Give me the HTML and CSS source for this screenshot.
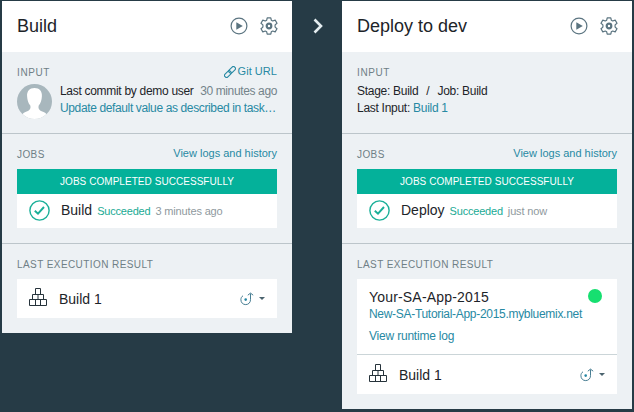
FILE: index.html
```
<!DOCTYPE html>
<html lang="en">
<head>
<meta charset="utf-8">
<title>Delivery Pipeline</title>
<link rel="stylesheet" href="styles.css">
</head>
<body>
<svg class="defs" aria-hidden="true">
  <symbol id="play" viewBox="0 0 18 18"><circle cx="9" cy="9" r="7.900" fill="none" stroke="currentColor" stroke-width="1.200"/><path d="M6.300 5.200 12.800 9l-6.500 3.800z" fill="currentColor"/></symbol>
  <symbol id="gear" viewBox="0 0 18 18"><path d="M7.200.8h3.600l.5 2.400 1.400.8 2.500-.9L17 6.200l-1.900 1.700v2.200l1.900 1.700-1.800 3.100-2.500-.9-1.400.8-.5 2.400H7.200l-.5-2.400-1.400-.8-2.500.9L1 11.800l1.900-1.700V7.900L1 6.200l1.800-3.100 2.500.9 1.400-.8z" fill="none" stroke="currentColor" stroke-width="1.200" stroke-linejoin="round"/><circle cx="9" cy="9" r="2.300" fill="none" stroke="currentColor" stroke-width="2.200"/></symbol>
  <symbol id="check" viewBox="0 0 21 21"><circle cx="10.500" cy="10.500" r="9.600" fill="none" stroke="currentColor" stroke-width="1.400"/><path d="m5.800 10.700 3.200 3 6-6.700" fill="none" stroke="currentColor" stroke-width="1.900"/></symbol>
  <symbol id="blocks" viewBox="0 0 18 18"><path d="M6.500.5h5v6h-5zM3.500 6.500h11v5h-11zM9 6.500v5M.5 11.500h17v6H.5zM6.500 11.500v6M11.500 11.500v6" fill="none" stroke="currentColor"/></symbol>
  <symbol id="deploy" viewBox="0 0 14 14"><path d="M3 3.800C1.500 4.600.9 6.200.9 7.700c0 3 2.100 4.900 4.800 4.900s4.800-2 4.800-4.900V1.500M7.800 3.200l2.700-2.100 2.700 2.100" fill="none" stroke="currentColor"/><circle cx="5.700" cy="7.600" r="1.300" fill="#2385a3"/></symbol>
  <symbol id="link" viewBox="0 0 12 12"><g fill="none" stroke="currentColor" stroke-width="1.100" transform="rotate(-45 6 6)"><rect x="-.8" y="4" width="7.600" height="4" rx="1.800"/><rect x="5.200" y="4" width="7.600" height="4" rx="1.800"/></g></symbol>
</svg>
<main class="pipeline">
  <article class="stage">
    <header class="stage-header">
      <h1>Build</h1>
      <svg class="tool"><use href="#play"/></svg>
      <svg class="tool"><use href="#gear"/></svg>
    </header>
    <section class="input">
      <div class="heading"><h2>INPUT</h2><a class="small-link git"><svg class="link-icon"><use href="#link"/></svg>Git URL</a></div>
      <div class="commit">
        <svg class="avatar" viewBox="0 0 35 35"><defs><clipPath id="disc"><circle cx="17.500" cy="17.500" r="17.500"/></clipPath></defs><g clip-path="url(#disc)"><path d="M0 0h35v35H0z" fill="#a8b7bd"/><path d="M17.500 4c-5 0-7.800 3.300-7.400 8.300.2 4 1.200 7 3.200 9.200.7 3.200-.4 5-4.300 6.300-3 1-5 3-6 7.200h29c-1-4.200-3-6.200-6-7.200-3.900-1.300-5-3.100-4.300-6.300 2-2.200 3-5.200 3.200-9.200.4-5-2.400-8.300-7.400-8.300z" fill="#fff"/></g></svg>
        <div class="commit-text">
          <div class="commit-line"><span>Last commit by demo user</span><span class="time">30 minutes ago</span></div>
          <div><a class="message">Update default value as described in task…</a></div>
        </div>
      </div>
    </section>
    <section class="jobs">
      <div class="heading"><h2>JOBS</h2><a class="small-link">View logs and history</a></div>
      <div class="banner">JOBS COMPLETED SUCCESSFULLY</div>
      <div class="job"><svg class="check"><use href="#check"/></svg><span class="job-name">Build</span><span class="status">Succeeded</span><span class="ago">3 minutes ago</span></div>
    </section>
    <section class="result">
      <h2>LAST EXECUTION RESULT</h2>
      <div class="box">
        <div class="build"><svg class="blocks"><use href="#blocks"/></svg><span class="build-name">Build 1</span><svg class="deploy"><use href="#deploy"/></svg><i class="caret"></i></div>
      </div>
    </section>
  </article>
  <div class="arrow"><svg viewBox="0 0 10 16"><path d="m1.500 1.500 6.500 6.500-6.500 6.500" fill="none" stroke="#e4edf0" stroke-width="2.600"/></svg></div>
  <article class="stage">
    <header class="stage-header">
      <h1>Deploy to dev</h1>
      <svg class="tool"><use href="#play"/></svg>
      <svg class="tool"><use href="#gear"/></svg>
    </header>
    <section class="input">
      <div class="heading"><h2>INPUT</h2></div>
      <div class="source"><span>Stage: Build</span><span class="slash">/</span><span>Job: Build</span></div>
      <div class="source">Last Input:&nbsp;<a>Build 1</a></div>
    </section>
    <section class="jobs">
      <div class="heading"><h2>JOBS</h2><a class="small-link">View logs and history</a></div>
      <div class="banner">JOBS COMPLETED SUCCESSFULLY</div>
      <div class="job"><svg class="check"><use href="#check"/></svg><span class="job-name">Deploy</span><span class="status">Succeeded</span><span class="ago">just now</span></div>
    </section>
    <section class="result">
      <h2>LAST EXECUTION RESULT</h2>
      <div class="box">
        <div class="app">
          <div class="app-title"><span>Your-SA-App-2015</span><i class="dot"></i></div>
          <a class="route">New-SA-Tutorial-App-2015.mybluemix.net</a>
          <a class="runtime">View runtime log</a>
        </div>
        <div class="build"><svg class="blocks"><use href="#blocks"/></svg><span class="build-name">Build 1</span><svg class="deploy"><use href="#deploy"/></svg><i class="caret"></i></div>
      </div>
    </section>
  </article>
</main>
</body>
</html>
```
FILE: styles.css
```
* { box-sizing: border-box; }
body {
  margin: 0;
  height: 412px;
  overflow: hidden;
  background: #263b46;
  color: #1d2429;
  font: 12px/17px "Liberation Sans", Arial, sans-serif;
  white-space: nowrap;
}
.defs { display: none; }
svg { display: block; flex: none; }
a { color: #2789a3; }
.pipeline { display: flex; align-items: flex-start; padding: 1px 2px 0; }
.stage { width: 290px; flex: none; background: #edf1f4; }
.stage-header { display: flex; align-items: center; height: 51px; padding: 0 14px 2px 15px; background: #fff; }
h1 { margin: 0 auto 0 0; font-size: 18px; line-height: 22px; font-weight: 400; }
.tool { width: 18px; height: 18px; color: #5b7480; }
.tool + .tool { margin-left: 12px; }
h2 { margin: 0; font-size: 10px; line-height: 13px; font-weight: 400; letter-spacing: .42px; color: #6f7f86; }
.heading { display: flex; justify-content: space-between; align-items: flex-start; }
.small-link { display: flex; align-items: center; font-size: 11px; line-height: 13px; }
.link-icon { width: 12px; height: 12px; margin-right: 2px; }
.git { letter-spacing: .05px; }
.input { height: 82px; padding: 14px 15px 0; border-bottom: 1px solid #bcc5ca; }
.input .heading { height: 17px; }
.input h2 { letter-spacing: .6px; }
.input .small-link { margin-top: -1px; }
.commit { display: flex; gap: 8px; }
.avatar { width: 35px; height: 35px; margin-top: 1px; }
.commit-text { width: 218px; letter-spacing: -.3px; }
.commit-line { display: flex; justify-content: space-between; }
.time { color: #74838a; letter-spacing: -.37px; }
.message { letter-spacing: -.37px; }
.source { display: flex; letter-spacing: -.28px; }
.slash { margin: 0 8px; }
.jobs { height: 110px; padding: 13px 15px 0; border-bottom: 1px solid #bcc5ca; }
.jobs .heading { height: 22px; }
.jobs h2 { padding-top: 1px; }
.banner { height: 25px; background: #04b19a; color: #fff; font-size: 10px; line-height: 25px; text-align: center; letter-spacing: .05px; }
.job { display: flex; align-items: center; height: 34px; padding: 0 12px; background: #fff; }
.check { width: 21px; height: 21px; margin: -2px 11px 0 0; color: #1aaf98; }
.job-name { margin: -2px 5px 0 0; font-size: 14px; }
.status { margin-right: 5px; font-size: 11px; color: #1aaa94; letter-spacing: -.2px; }
.ago { font-size: 11px; color: #8f999e; letter-spacing: -.15px; }
.result { padding: 14px 15px 15px; }
.result h2 { height: 21px; }
.box { background: #fff; }
.build { display: flex; align-items: center; height: 39px; padding: 0 12px; }
.blocks { width: 18px; height: 18px; margin: -3px 12px 0 0; color: #26333b; }
.build-name { margin-right: auto; padding-top: 2px; font-size: 14px; }
.deploy { width: 14px; height: 14px; margin-right: 5px; color: #477d92; }
.caret { border: 3px solid transparent; border-top-color: #4b636e; border-bottom: 0; }
.app { height: 76px; padding: 10px 12px 0; border-bottom: 1px solid #cbd5d8; }
.app-title { display: flex; justify-content: space-between; height: 17px; font-size: 14px; letter-spacing: .18px; }
.dot { width: 14px; height: 14px; margin-right: 3px; border-radius: 50%; background: #16df70; }
.route, .runtime { display: block; letter-spacing: -.3px; }
.runtime { margin-top: 5px; letter-spacing: -.2px; }
.arrow { width: 50px; padding: 17px 0 0 21px; }
.arrow svg { width: 10px; height: 16px; }
```
